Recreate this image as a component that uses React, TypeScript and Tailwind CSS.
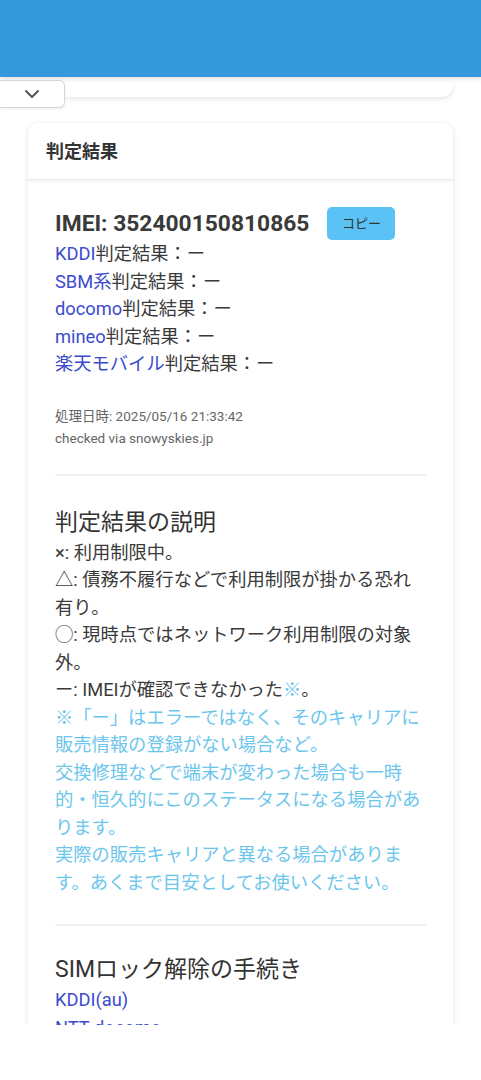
import React from "react";

const font = { fontFamily: 'Roboto, "Noto Sans CJK JP", sans-serif' };

function Link({ children }: { children: React.ReactNode }) {
  return <span className="text-[#3b4bcf]">{children}</span>;
}

export default function App() {
  return (
    <div className="h-[1025px] overflow-hidden bg-white" style={font}>
      <div className="relative z-10 h-[77px] bg-[#3598da] shadow-[0_2px_4px_rgba(0,0,0,0.12)]" />
      <div className="flex items-start pt-[3px]">
        <div className="relative z-10 flex h-[28px] w-[65px] items-center justify-center rounded-tr-[6px] rounded-br-[6px] border border-l-0 border-[#d6d6d6] bg-white shadow-[0_1px_3px_rgba(0,0,0,0.08)]">
          <svg width="16" height="10" viewBox="0 0 16 10" fill="none">
            <path d="M2 2l6 6 6-6" stroke="#555" strokeWidth="2" strokeLinecap="round" strokeLinejoin="round" />
          </svg>
        </div>
        <div className="mt-[2px] mr-[28px] h-[15px] flex-1 rounded-br-[12px] bg-white shadow-[0_2px_5px_rgba(0,0,0,0.1)]" />
      </div>
      <div className="mx-[28px] mt-[15px] rounded-[10px] bg-white shadow-[0_1px_6px_rgba(0,0,0,0.1)]">
        <div className="flex h-[57px] items-center rounded-t-[10px] border-b border-[#ececec] px-[18px] text-[18px] font-bold text-[#333] shadow-[0_2px_3px_rgba(0,0,0,0.05)]">
          判定結果
        </div>
        <div className="pl-[27px] pr-[27px] pt-[27px] text-[18.3px] leading-[27.5px] text-[#3a3a3a]">
          <div className="flex items-center">
            <span className="text-[22.8px] font-bold leading-[33px] text-[#3a3a3a]">IMEI: 352400150810865</span>
            <span className="ml-[18px] flex h-[33px] w-[68px] items-center justify-center rounded-[5px] bg-[#5bc2f5] text-[13px] text-[#333]">
              コピー
            </span>
          </div>
          <div><Link>KDDI</Link>判定結果：ー</div>
          <div><Link>SBM系</Link>判定結果：ー</div>
          <div><Link>docomo</Link>判定結果：ー</div>
          <div><Link>mineo</Link>判定結果：ー</div>
          <div><Link>楽天モバイル</Link>判定結果：ー</div>
          <div className="mt-[27px] text-[13.5px] leading-[22px] text-[#666]">
            <div>処理日時: 2025/05/16 21:33:42</div>
            <div>checked via snowyskies.jp</div>
          </div>
          <div className="mt-[25px] h-[2px] bg-[#f0f0f0]" />
          <div className="mt-[30px] text-[23px] leading-[33px] text-[#333]">判定結果の説明</div>
          <div>×: 利用制限中。</div>
          <div>△: 債務不履行などで利用制限が掛かる恐れ有り。</div>
          <div>◯: 現時点ではネットワーク利用制限の対象外。</div>
          <div>ー: IMEIが確認できなかった<span className="text-[#6cc6ec]">※</span>。</div>
          <div className="text-[#6cc6ec]">
            <div>※「ー」はエラーではなく、そのキャリアに販売情報の登録がない場合など。</div>
            <div>交換修理などで端末が変わった場合も一時的・恒久的にこのステータスになる場合があります。</div>
            <div>実際の販売キャリアと異なる場合があります。あくまで目安としてお使いください。</div>
          </div>
          <div className="mt-[28px] h-[2px] bg-[#f0f0f0]" />
          <div className="mt-[27px] text-[23px] leading-[33px] text-[#333]">SIMロック解除の手続き</div>
          <div><Link>KDDI(au)</Link></div>
          <div><Link>NTT docomo</Link></div>
        </div>
      </div>
    </div>
  );
}
